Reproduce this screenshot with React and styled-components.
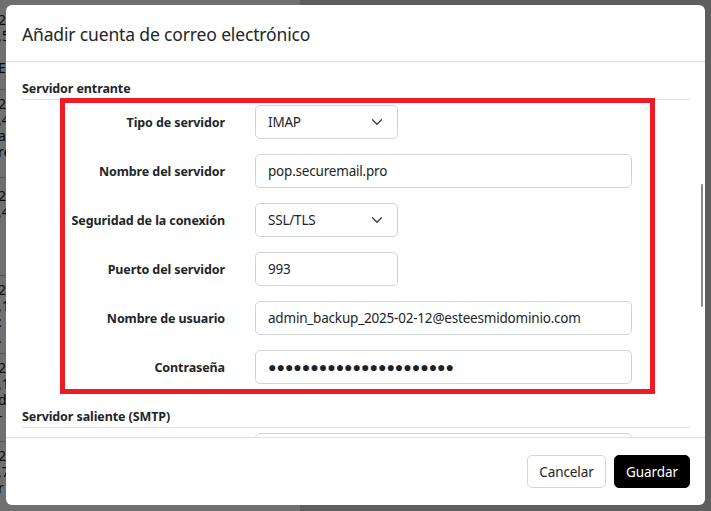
import React from 'react'
import styled, { createGlobalStyle } from 'styled-components'
import { ChevronDown } from 'lucide-react'

const GlobalStyle = createGlobalStyle`
  html, body { margin:0; padding:0; }
  body { font-family:"Noto Sans", "Open Sans", sans-serif; color:#212529; }
  * { box-sizing:border-box; }
`

const Screen = styled.div`
  position:relative;
  width:711px;
  height:511px;
  overflow:hidden;
  background:#d6d6d6;
`

const PageBehind = styled.div`
  display:flex;
  flex-direction:column;
  height:100%;
`

const PageTop = styled.div`
  height:5px;
  background:#b8b8b8;
`

const Table = styled.div`
  width:300px;
  flex:1;
  background:#ffffff;
`

const TableRow = styled.div`
  height:${(p) => p.h}px;
  padding-top:${(p) => p.pt}px;
  margin-left:-2px;
  border-bottom:1px solid #c4c4c4;
  font-size:14px;
  line-height:16px;
  color:#1a1a1a;
`

const Overlay = styled.div`
  position:absolute;
  inset:0;
  background:rgba(0,0,0,0.56);
`

const Modal = styled.div`
  position:absolute;
  left:6px;
  top:5px;
  width:699px;
  height:500px;
  background:#ffffff;
  border-radius:6px;
  display:flex;
  flex-direction:column;
  overflow:hidden;
`

const Header = styled.div`
  height:57px;
  flex-shrink:0;
  display:flex;
  align-items:center;
  padding:1px 16px 0;
  border-bottom:1px solid #e2e2e2;
`

const Title = styled.h1`
  margin:0;
  font-size:17.5px;
  font-weight:400;
  letter-spacing:-0.15px;
  color:#212529;
`

const Body = styled.div`
  position:relative;
  flex:1;
  overflow:hidden;
  padding:18px 15px 0 16px;
`

const SectionTitle = styled.h2`
  margin:${(p) => (p.first ? '0' : '24px 0 0')};
  font-size:12.5px;
  font-weight:700;
  letter-spacing:-0.1px;
  line-height:18px;
  padding-bottom:1px;
  border-bottom:1px solid #e2e2e2;
  color:#212529;
`

const Form = styled.div`
  display:flex;
  flex-direction:column;
  gap:15px;
  margin-top:5px;
`

const Row = styled.div`
  display:flex;
  align-items:center;
  gap:30px;
`

const Label = styled.label`
  width:203px;
  text-align:right;
  font-size:12.5px;
  font-weight:700;
  letter-spacing:-0.1px;
  color:#212529;
`

const Input = styled.input`
  width:${(p) => (p.short ? 143 : 377)}px;
  height:34px;
  border:1px solid #cfd4d9;
  border-radius:5px;
  padding:0 12px;
  font-family:inherit;
  font-size:13.5px;
  letter-spacing:-0.2px;
  color:#212529;
  background:#fff;
  outline:none;
`

const SecretInput = styled(Input)`
  font-family:"Liberation Sans", "DejaVu Sans", sans-serif;
  font-size:14px;
  letter-spacing:0;
  color:#1e2125;
`

const SelectWrap = styled.div`
  position:relative;
  width:143px;
`

const Select = styled.select`
  appearance:none;
  width:100%;
  height:34px;
  border:1px solid #cfd4d9;
  border-radius:5px;
  padding:0 12px;
  font-family:inherit;
  font-size:13.5px;
  letter-spacing:-0.2px;
  color:#212529;
  background:#fff;
  outline:none;
`

const Chevron = styled(ChevronDown)`
  position:absolute;
  right:12px;
  top:50%;
  transform:translateY(-50%);
  color:#343a40;
  pointer-events:none;
`

const Highlight = styled.div`
  position:absolute;
  left:54px;
  top:36px;
  width:595px;
  height:296px;
  border:5px solid #ed1c24;
  pointer-events:none;
`

const ScrollThumb = styled.div`
  position:absolute;
  right:2px;
  top:122px;
  width:2px;
  height:123px;
  border-radius:1px;
  background:#8a8a8a;
`

const Footer = styled.div`
  height:68px;
  flex-shrink:0;
  display:flex;
  align-items:center;
  justify-content:flex-end;
  gap:8px;
  padding:0 15px;
  border-top:1px solid #e2e2e2;
`

const Button = styled.button`
  width:${(p) => p.w}px;
  height:33px;
  border-radius:5px;
  font-family:inherit;
  font-size:13.5px;
  letter-spacing:-0.1px;
  padding:0;
  cursor:pointer;
  border:1px solid ${(p) => (p.primary ? '#000' : '#d3d7dc')};
  background:${(p) => (p.primary ? '#000' : '#fff')};
  color:${(p) => (p.primary ? '#fff' : '#212529')};
`

const behindRows = [
  { h: 90, pt: 12, lines: ['2025-02-12', ',5 MB', '', 'Entrada'] },
  { h: 88, pt: 6, lines: ['2025-02-11', ',4 MB', 'archivo', 'respaldo'] },
  { h: 98, pt: 10, lines: ['2025-02-10', ',4 MB'] },
  { h: 78, pt: 6, lines: ['2025-02-09', ',1 MB', ': nota', '.'] },
  { h: 88, pt: 6, lines: ['2025-02-08', ',1 MB', 'datos', '-'] },
  { h: 70, pt: 6, lines: ['2025-02-07', ',7 MB', 'r'] },
]

const SelectField = ({ value, options }) => (
  <SelectWrap>
    <Select defaultValue={value}>
      {options.map((o) => (
        <option key={o}>{o}</option>
      ))}
    </Select>
    <Chevron size={18} strokeWidth={1.6} />
  </SelectWrap>
)

const App = () => {
  return (
    <Screen>
      <GlobalStyle />
      <PageBehind>
        <PageTop />
        <Table>
          {behindRows.map((r, i) => (
            <TableRow key={i} h={r.h} pt={r.pt}>
              {r.lines.map((l, j) => (
                <div key={j}>{l || '\u00a0'}</div>
              ))}
            </TableRow>
          ))}
        </Table>
      </PageBehind>
      <Overlay />

      <Modal>
        <Header>
          <Title>Añadir cuenta de correo electrónico</Title>
        </Header>

        <Body>
          <SectionTitle first>Servidor entrante</SectionTitle>
          <Form>
            <Row>
              <Label>Tipo de servidor</Label>
              <SelectField value="IMAP" options={['IMAP', 'POP3']} />
            </Row>
            <Row>
              <Label>Nombre del servidor</Label>
              <Input defaultValue="pop.securemail.pro" />
            </Row>
            <Row>
              <Label>Seguridad de la conexión</Label>
              <SelectField value="SSL/TLS" options={['SSL/TLS', 'STARTTLS', 'Ninguna']} />
            </Row>
            <Row>
              <Label>Puerto del servidor</Label>
              <Input short defaultValue="993" />
            </Row>
            <Row>
              <Label>Nombre de usuario</Label>
              <Input defaultValue="admin_backup_2025-02-12@esteesmidominio.com" />
            </Row>
            <Row>
              <Label>Contraseña</Label>
              <SecretInput readOnly value={'\u25CF'.repeat(22)} />
            </Row>
          </Form>

          <SectionTitle>Servidor saliente (SMTP)</SectionTitle>
          <Form>
            <Row>
              <Label>Nombre del servidor</Label>
              <Input defaultValue="smtp.securemail.pro" />
            </Row>
            <Row>
              <Label>Puerto del servidor</Label>
              <Input short defaultValue="465" />
            </Row>
          </Form>

          <Highlight />
          <ScrollThumb />
        </Body>

        <Footer>
          <Button w={79}>Cancelar</Button>
          <Button primary w={76}>Guardar</Button>
        </Footer>
      </Modal>
    </Screen>
  )
}

export default App
